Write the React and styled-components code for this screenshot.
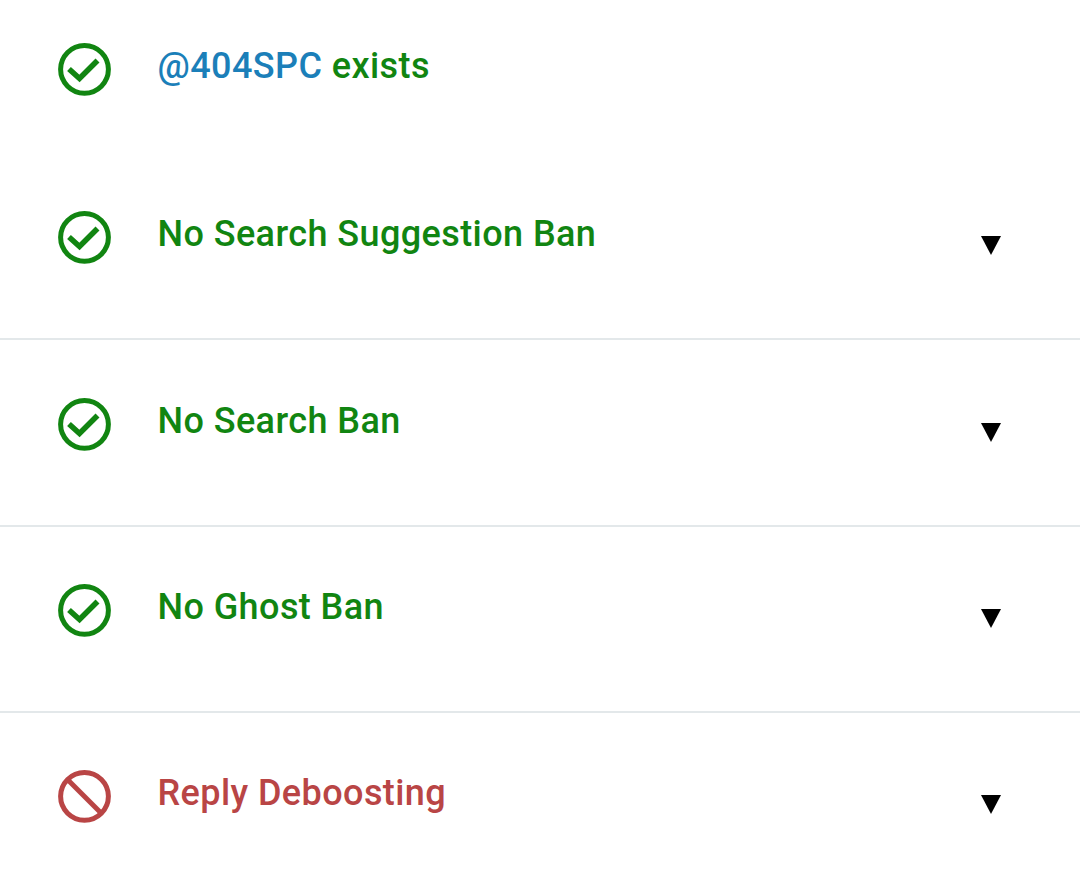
import React from 'react';
import styled, {createGlobalStyle} from 'styled-components';

const GREEN = '#118511';
const RED = '#b94545';
const BLUE = '#1b7fb9';

const Global = createGlobalStyle`
  html, body {
    margin: 0;
    background: #ffffff;
  }
`;

const List = styled.div`
  width: 1080px;
  height: 891px;
  overflow: hidden;
  font-family: Roboto, "Liberation Sans", sans-serif;
`;

const Row = styled.div`
  box-sizing: border-box;
  height: ${props => props.$height}px;
  padding: ${props => props.$top}px 79px 0 58px;
  display: flex;
  align-items: flex-start;
  border-bottom: ${props => props.$line ? '2px solid #e3e8ea' : 'none'};
`;

const Icon = styled.svg`
  width: 54px;
  height: 54px;
  flex: none;
  display: block;
  margin-top: -1px;
  margin-left: -1px;
`;

const Label = styled.div`
  margin-left: 46.5px;
  flex: 1;
  font-size: 36px;
  font-weight: 500;
  letter-spacing: 0.42px;
  line-height: 41px;
  margin-top: 3px;
  color: ${props => props.$color};
`;

const Handle = styled.span`
  color: ${BLUE};
`;

const Arrow = styled.div`
  flex: none;
  width: 0;
  height: 0;
  margin-top: 25px;
  border-left: 10px solid transparent;
  border-right: 10px solid transparent;
  border-top: 19px solid #000000;
`;

const CheckIcon = () => (
  <Icon viewBox="0 0 54 54" fill="none" stroke={GREEN} strokeWidth="5">
    <circle cx="27.5" cy="27.3" r="23.9" />
    <path d="M12 27 L22.5 36.5 L40.5 18.5" strokeWidth="5.6" />
  </Icon>
);

const BanIcon = () => (
  <Icon viewBox="0 0 54 54" fill="none" stroke={RED} strokeWidth="5">
    <circle cx="27.5" cy="27.3" r="23.9" />
    <path d="M11 11 L44 44" />
  </Icon>
);

const rows = [
  {label: 'No Search Suggestion Ban', height: 187, top: 58, line: true},
  {label: 'No Search Ban', height: 187, top: 58, line: true},
  {label: 'No Ghost Ban', height: 186, top: 57, line: true},
  {label: 'Reply Deboosting', height: 178, top: 57, banned: true},
];

const App = () => {
  return (
    <List>
      <Global />
      <Row $height={153} $top={43}>
        <CheckIcon />
        <Label $color={GREEN}><Handle>@404SPC</Handle> exists</Label>
      </Row>
      {rows.map(row => (
        <Row key={row.label} $height={row.height} $top={row.top} $line={row.line}>
          {row.banned ? <BanIcon /> : <CheckIcon />}
          <Label $color={row.banned ? RED : GREEN}>{row.label}</Label>
          <Arrow />
        </Row>
      ))}
    </List>
  );
};

export default App;
